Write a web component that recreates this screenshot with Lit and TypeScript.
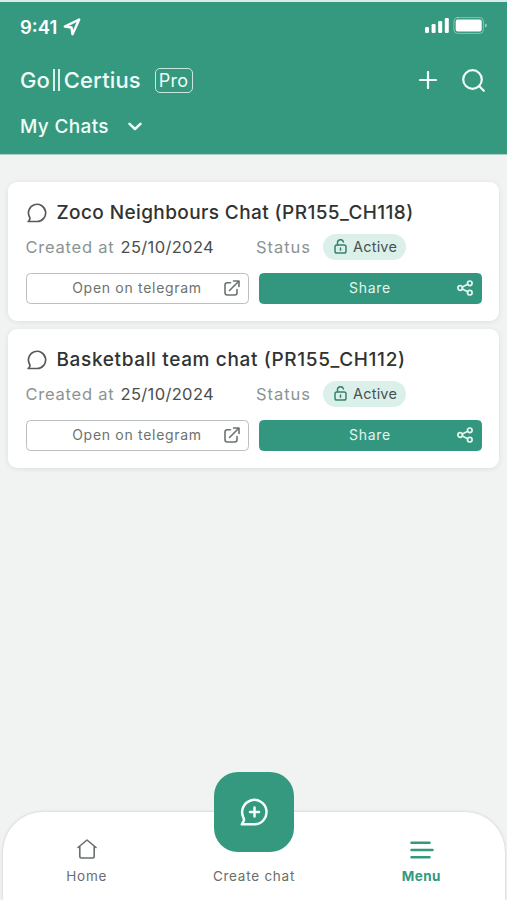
import { LitElement, html, css, svg } from "lit";
import { customElement, property } from "lit/decorators.js";

const icons = {
  bubble: svg`<path d="M1.200 18.500h9a8.600 8.600 0 1 0-7.700-4.500c.7 1.300.4 2.600-.4 3.600z"/>`,
  external: svg`<path d="M6.500 2.800H3.200A2.200 2.200 0 0 0 1 5v7.800A2.200 2.200 0 0 0 3.200 15h7.600a2.200 2.200 0 0 0 2.200-2.200V9.500M5.500 10.500 14.500 1.500M9.500 1h5.500v5.500"/>`,
  share: svg`<circle cx="3.200" cy="8" r="2.300"/><circle cx="12.800" cy="3.300" r="2.300"/><circle cx="12.800" cy="12.700" r="2.300"/><path d="m5.300 7 5.400-2.700M5.300 9l5.400 2.700"/>`,
  lock: svg`<rect x="1" y="6" width="11" height="8" rx="1.800"/><path d="M3.500 6V3.800a3 3 0 0 1 5.900-.9M6.500 9v2.200"/>`,
};

@customElement("chat-card")
export class ChatCard extends LitElement {
  @property() name = "";
  @property() created = "";
  @property() spacing = "0";

  static styles = css`
    :host {
      display: block;
      box-sizing: border-box;
      height: 138.500px;
      padding: 18px 17.500px 0;
      background: #fff;
      border-radius: 9px;
      box-shadow: 0 1px 5px rgba(40, 60, 55, 0.1);
      color: #3d4140;
    }
    svg { display: block; fill: none; stroke: currentColor; stroke-linecap: round; stroke-linejoin: round; }
    .title { display: flex; align-items: center; height: 25px; white-space: nowrap; font-size: 19px; font-weight: 500; color: #303332; }
    .title svg { width: 20px; height: 20px; margin: 0 10px 0 1px; stroke-width: 1.700; color: #555b59; flex: none; }
    .meta { display: flex; align-items: center; height: 26px; margin-top: 8.500px; font-size: 16.500px; white-space: nowrap; }
    .label { color: #8b9492; letter-spacing: 0.750px; }
    .created { width: 95px; }
    .date { width: 135.500px; letter-spacing: 0.350px; color: #4a4e4d; }
    .status { width: 67px; letter-spacing: 0.950px; }
    .badge { display: flex; align-items: center; box-sizing: border-box; width: 83px; height: 26px; padding-left: 11px; border-radius: 13px; background: #dbf0ea; font-size: 14.500px; color: #46524f; letter-spacing: 0.200px; }
    .badge svg { width: 13px; height: 15px; margin-right: 6px; stroke-width: 1.500; color: #38816c; }
    .actions { display: grid; grid-template-columns: 1fr 1fr; gap: 10px; margin-top: 13.200px; }
    .btn { display: grid; grid-template-columns: 1fr auto 1fr; align-items: center; box-sizing: border-box; height: 31px; padding: 0 0 1px; border: 1.500px solid #b9c0be; border-radius: 4.500px; background: #fff; color: #6b7270; font: inherit; font-size: 14px; letter-spacing: 0.700px; }
    .btn span { grid-column: 2; white-space: nowrap; }
    .btn svg { justify-self: end; width: 16px; height: 16px; margin-right: 8px; stroke-width: 1.600; }
    .btn.solid { border-color: #32977e; background: #32977e; color: #e4f5ef; }
    .solid svg { stroke-width: 1.700; }
  `;

  render() {
    return html`
      <div class="title">
        <svg viewBox="0 0 20 20">${icons.bubble}</svg>
        <span style="letter-spacing:${this.spacing}px">${this.name}</span>
      </div>
      <div class="meta">
        <span class="label created">Created at</span><span class="date">${this.created}</span>
        <span class="label status">Status</span>
        <span class="badge"><svg viewBox="0 0 13 15">${icons.lock}</svg>Active</span>
      </div>
      <div class="actions">
        <button class="btn"><span>Open on telegram</span><svg viewBox="0 0 16 16">${icons.external}</svg></button>
        <button class="btn solid"><span>Share</span><svg viewBox="0 0 16 16">${icons.share}</svg></button>
      </div>
    `;
  }
}

@customElement("app-root")
export class AppRoot extends LitElement {
  static styles = css`
    :host { display: flex; flex-direction: column; height: 900px; overflow: hidden; background: #f0f3f2; font-family: Inter, "Open Sans", sans-serif; }
    svg { display: block; fill: none; stroke: currentColor; stroke-linecap: round; stroke-linejoin: round; }
    header { box-sizing: border-box; height: 155px; border-top: 2px solid #d7ece6; background: #34997f; color: #f0fcf8; padding: 13px 20px 0; border-bottom: 1px solid #a8d0c4; }
    .row { display: flex; align-items: center; white-space: nowrap; }
    .statusbar { height: 24px; font-size: 18.500px; font-weight: 600; color: #fff; }
    .time { width: 43px; }
    .arrow { width: 18px; height: 18px; stroke-width: 2.400; }
    .signal { width: 62px; height: 17px; margin: -3px 0 0 auto; fill: #fff; stroke: none; }
    .brand { height: 30px; margin-top: 26px; }
    .logo { display: flex; align-items: center; width: 134.500px; font-size: 22px; font-weight: 500; margin-top: -1px; }
    .bars { box-sizing: border-box; width: 7px; height: 22px; border: solid #d8f2ea; border-width: 0 2px; margin: 0 4px 0 3px; }
    .word { letter-spacing: 0.150px; }
    .pro { display: grid; place-items: center; box-sizing: border-box; width: 38px; height: 25px; border: 1.300px solid #c9e9df; border-radius: 5px; font-size: 18px; letter-spacing: 0.200px; }
    .plus { width: 18px; height: 18px; margin-left: auto; stroke-width: 2.200; }
    .search { width: 23px; height: 23px; margin: 0 2px 0 25px; stroke-width: 2.200; }
    .section { height: 28px; margin-top: 17.500px; font-size: 19px; }
    .section span { width: 107.500px; letter-spacing: 0.350px; font-weight: 500; }
    .chevron { width: 14px; height: 9px; stroke-width: 2.500; }
    main { flex: 1; display: flex; flex-direction: column; gap: 8.800px; padding: 27px 8px 0; }
    nav { display: grid; grid-template-columns: 1fr 1fr 1fr; box-sizing: border-box; height: 88.500px; margin: 0 2px 0 3px; border-radius: 40px 40px 0 0; background: #fff; box-shadow: 0 0 3px rgba(40, 55, 60, 0.22); font-size: 13.500px; color: #686e6c; letter-spacing: 0.750px; }
    .item { display: flex; flex-direction: column; align-items: center; }
    .glyph { display: grid; place-items: center; height: 20px; margin-top: 27px; }
    .home { width: 20px; height: 20px; stroke-width: 1.600; }
    .menu { width: 24px; height: 18px; margin: 2px 0 0 2px; stroke-width: 2.500; }
    .item span { line-height: 20px; margin-top: 7.500px; white-space: nowrap; }
    .active { color: #34997f; font-weight: 700; letter-spacing: 0.450px; }
    .fab { display: grid; place-items: center; width: 80px; height: 80px; margin-top: -39.500px; border-radius: 24px; background: #34997f; color: #f2fffb; }
    .fab svg { width: 28px; height: 28px; stroke-width: 2.500; }
    .item .fab + span { margin-top: 14px; }
  `;

  render() {
    return html`
      <header>
        <div class="row statusbar">
          <span class="time">9:41</span>
          <svg class="arrow" viewBox="0 0 18 18"><path d="M1.800 8.500 16.200 1.600 9.500 16.200 8.500 9.500z"/></svg>
          <svg class="signal" viewBox="0 0 62 17">
            <rect x="0" y="10" width="4" height="6" rx="1.200"/><rect x="6.600" y="7" width="4" height="9" rx="1.200"/>
            <rect x="13.200" y="4" width="4" height="12" rx="1.200"/><rect x="19.800" y="1" width="4" height="15" rx="1.200"/>
            <rect x="28.900" y=".6" width="29.500" height="15.800" rx="3.500" stroke="#fff" stroke-opacity=".4" fill="none"/>
            <rect x="30.700" y="2.500" width="26" height="12" rx="2"/><path d="M60 6.500q2 .6 2 2t-2 2z" fill-opacity=".5"/>
          </svg>
        </div>
        <div class="row brand">
          <div class="logo"><span>Go</span><i class="bars"></i><span class="word">Certius</span></div>
          <span class="pro">Pro</span>
          <svg class="plus" viewBox="0 0 18 18"><path d="M9 1v16M1 9h16"/></svg>
          <svg class="search" viewBox="0 0 23 23"><circle cx="10.500" cy="10.500" r="9.300"/><path d="m17 17 4.800 4.800"/></svg>
        </div>
        <div class="row section">
          <span>My Chats</span>
          <svg class="chevron" viewBox="0 0 14 9"><path d="m1.500 1.800 5.500 5.200 5.500-5.200"/></svg>
        </div>
      </header>
      <main>
        <chat-card name="Zoco Neighbours Chat (PR155_CH118)" created="25/10/2024" spacing="0.4"></chat-card>
        <chat-card name="Basketball team chat (PR155_CH112)" created="25/10/2024" spacing="0.64"></chat-card>
      </main>
      <nav>
        <div class="item">
          <div class="glyph"><svg class="home" viewBox="0 0 20 20"><path d="M1 8.500 10 1l9 7.500M2.800 7.500v9.800q0 1.700 1.700 1.700h11q1.700 0 1.700-1.700V7.500"/></svg></div>
          <span>Home</span>
        </div>
        <div class="item">
          <div class="fab"><svg viewBox="0 0 28 28"><path d="M1.800 26.300h12.700A12.200 12.200 0 1 0 3.300 19.300q1.200 2.300.3 3.900zM14.500 9.500v9M10 14h9"/></svg></div>
          <span>Create chat</span>
        </div>
        <div class="item active">
          <div class="glyph"><svg class="menu" viewBox="0 0 24 18"><path d="M1.500 1.800h18M1.500 9h21M1.500 16.200h18"/></svg></div>
          <span>Menu</span>
        </div>
      </nav>
    `;
  }
}
